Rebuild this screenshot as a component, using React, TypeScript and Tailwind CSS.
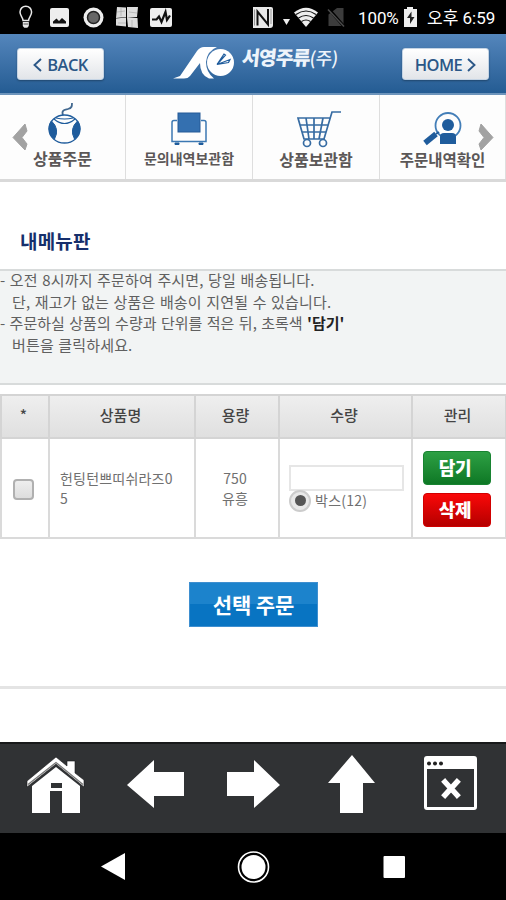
import type { ReactNode } from "react";

const blue = "#1f5c9c";

const StatusBar = () => (
  <div className="flex h-[34px] shrink-0 items-center bg-black text-white">
    <svg width="253" height="34" viewBox="0 0 253 34" fill="none">
      <path d="M23 20.500c0-3-3-4.500-3-8.500a5.800 5.800 0 0 1 11.600 0c0 4-3 5.500-3 8.500z" stroke="#e8e8e8" strokeWidth="1.500" />
      <path d="M22.800 22h6v4l-1.500 1.800h-3L22.800 26z" fill="#e8e8e8" />
      <path d="M23.500 24h4.500" stroke="#555" />
      <rect x="50" y="8" width="19" height="19" rx="2" fill="#eee" />
      <path d="M53 23.500v-2l3.500-3 2.500 2.500 3-3 4 3.500v2z" fill="#111" />
      <circle cx="93.500" cy="17.500" r="10" fill="#eee" />
      <circle cx="93.500" cy="17.500" r="6" fill="#666" stroke="#222" strokeWidth="1.500" />
      <path d="M117 7l9 .5v9.500l-10 1zM127 7h11l-1 10-10 1zM116 18.500l10-1v9l-10-1zM127 18h10.500l.5 10-10-1z" fill="#ddd" />
      <path d="M117 12l8-1M121 8v8M129 12l8 1M132 20v7M118 23h8" stroke="#aaa" strokeWidth=".7" />
      <rect x="150" y="8" width="22" height="19" rx="2" fill="#eee" />
      <path d="M152 19.500h4.500l2.500-3 2.500 5.500 4-10 1.500 8 3-4.500" stroke="#111" strokeWidth="2.200" />
    </svg>
    <svg width="101" height="34" viewBox="253 0 101 34" fill="none">
      <path d="M253 7h18q2 0 2 2v16q0 3-3 3h-17z" fill="#e8e8e8" />
      <path d="M257.500 25.500V11.500l10.500 13V9" stroke="#111" strokeWidth="2" />
      <path d="M254.500 9.500v16M271 9v15" stroke="#999" />
      <path d="M283 19h7l-3.500 6z" fill="#eee" />
      <path d="M294 12.500Q306 3 318 12.500L306 27z" fill="#eee" />
      <path d="M296 14.500q10-7 20 0M298.500 18q7.500-5 15 0M301.500 21.500q4.500-3 9 0" stroke="#111" strokeWidth="1.200" />
      <path d="M328.500 14.500L337 8h6.500v18H328.500z" fill="#3c3c3c" />
      <path d="M328 8l16 18.500" stroke="#000" strokeWidth="3" />
      <path d="M328 9.500l16 17" stroke="#4a4a4a" strokeWidth="1.500" />
    </svg>
    <span className="mt-[2px] ml-[4px] w-[41px] font-['Roboto'] text-[17px] leading-none tracking-[-0.100px]">100%</span>
    <svg className="ml-[4px]" width="15" height="22" viewBox="0 0 15 22">
      <path d="M4 1h6v2h4v18H1V3h3z" fill="#eee" />
      <path d="M8.500 5.500L4 12h3v6l4.500-7H8.500z" fill="#222" />
    </svg>
    <span className="mt-[2px] ml-[9px] whitespace-nowrap font-['Roboto','Noto_Sans_CJK_KR',sans-serif] text-[17px] leading-none">오후 6:59</span>
  </div>
);

const HeaderButton = ({ children }: { children: ReactNode }) => (
  <button className="flex h-[32px] w-[87px] items-center justify-center gap-[5px] rounded-[3px] border border-[#c5d4e4] bg-gradient-to-b from-white via-[#f1f2f4] to-[#e2e5e9] pt-[2px] font-['Open_Sans',sans-serif] text-[16.500px] leading-[28px] font-semibold tracking-[-0.600px] text-[#2b5787] shadow-[0_1px_2px_rgba(0,0,0,0.3)]">
    {children}
  </button>
);

const Chevron = ({ right = false }: { right?: boolean }) => (
  <svg width="9" height="14" viewBox="0 0 9 14" fill="none" stroke="#2b5787" strokeWidth="1.900">
    <path d={right ? "M1 1l6.500 6L1 13" : "M8 1L1.500 7 8 13"} />
  </svg>
);

const Header = () => (
  <header className="flex h-[61px] shrink-0 items-center justify-between border-b-2 border-[#6d94bb] bg-gradient-to-b from-[#5486bc] to-[#245c93] pr-[17px] pl-[17px]">
    <HeaderButton>
      <Chevron />
      <span>BACK</span>
    </HeaderButton>
    <div className="flex h-full items-start pl-[5px]">
      <svg className="mt-[10px]" width="62" height="36" viewBox="0 0 62 36">
        <path d="M0 34.500L7 32 24 7Q27 3 31 3H44Q34 7 33 18Q33 28 41 34.500H36Q27 31 27 19L17 32Q15 34.500 11 34.500z" fill="#fff" />
        <circle cx="47.500" cy="18.500" r="13.500" fill="#fff" />
        <path d="M44 20.500L51 10l1.500 1zM44 20.500l13-5-1.500 3z" fill="#fff" stroke={blue} strokeWidth="1.200" />
      </svg>
      <span className="mt-[10px] ml-[7px] flex -skew-x-6 items-baseline whitespace-nowrap font-['Noto_Sans_CJK_KR',sans-serif] text-[19.500px] leading-[26px] font-black tracking-[-1px] text-[#eef4fb]">
        서영주류
        <span className="text-[18px] font-medium tracking-[-0.300px]">(주)</span>
      </span>
    </div>
    <HeaderButton>
      <span>HOME</span>
      <Chevron right />
    </HeaderButton>
  </header>
);

const MouseIcon = () => (
  <svg width="38" height="44" viewBox="0 0 38 44" fill="none" stroke={blue}>
    <path d="M18 14c-2-5 2-5 5-6 4-1 4-3 4-6" stroke="#42688f" strokeWidth="1.800" />
    <ellipse cx="19.500" cy="28" rx="15.500" ry="14" strokeWidth="1.300" />
    <path d="M6.500 20Q15 28 9.500 38Q4 34 4 28Q4 23 6.500 20zM32.500 20Q24 28 29.500 38Q35 34 35 28Q35 23 32.500 20z" fill={blue} />
    <path d="M9 18Q19.500 27 30 18M11 17Q19.500 19 28 17" strokeWidth="1.200" />
  </svg>
);

const ChairIcon = () => (
  <svg width="38" height="34" viewBox="0 0 38 34" fill="none" stroke={blue}>
    <path d="M7 8.500H4q-2 0-2 2V29.500h34V10.500q0-2-2-2h-3" stroke="#3c78b2" strokeWidth="1.500" />
    <path d="M5 31h4v1.500H5zM29 31h4v1.500h-4z" fill={blue} />
    <rect x="8" y="1" width="22" height="19" fill="#3470b0" stroke="#245a98" />
  </svg>
);

const CartIcon = () => (
  <svg width="46" height="38" viewBox="0 0 46 38" fill="none" stroke="#376ca3" strokeWidth="1.700">
    <path d="M45 2h-9l-8 27H8L2 8h32M4 15h28M6 22h24M10 8l3 21M18 8v21M27 8l-4 21" />
    <circle cx="11" cy="33" r="3.500" />
    <circle cx="27" cy="33" r="3.500" />
  </svg>
);

const SearchPersonIcon = () => (
  <svg width="40" height="35" viewBox="0 0 40 35" fill="none">
    <circle cx="26" cy="13.500" r="12.500" stroke="#437eb8" strokeWidth="1.800" />
    <circle cx="26" cy="13" r="6" fill={blue} />
    <path d="M18 32V25q0-4 4-4h8q4 0 4 4v7z" fill={blue} />
    <path d="M3 31L14 22" stroke={blue} strokeWidth="5.500" />
    <path d="M14 22l3-2" stroke={blue} strokeWidth="2" />
  </svg>
);

const NavArrow = ({ right = false }: { right?: boolean }) => (
  <svg
    className={right ? "absolute top-[29px] right-[12px]" : "absolute top-[29px] left-[12px]"}
    width="16"
    height="28"
    viewBox="0 0 16 28"
  >
    <path
      d={right ? "M3 0L15 13.500 3 26L1 20L6 13.500 1 7z" : "M13 0L1 13.500 13 26L15 20L10 13.500 15 7z"}
      fill="#a2a2a2"
      stroke="#a2a2a2"
    />
  </svg>
);

const navItems = [
  { label: "상품주문", icon: <MouseIcon />, iconStyle: "mt-[6px] h-[45px] ml-[2px]", text: "text-[16px]" },
  { label: "문의내역보관함", icon: <ChairIcon />, iconStyle: "mt-[17px] h-[34px]", text: "text-[14px]" },
  { label: "상품보관함", icon: <CartIcon />, iconStyle: "mt-[15px] h-[37px] ml-[6px]", text: "text-[16px]" },
  { label: "주문내역확인", icon: <SearchPersonIcon />, iconStyle: "mt-[17px] h-[35px] mr-[2px]", text: "text-[15.500px]" },
];

const TopNav = () => (
  <nav className="relative grid h-[87px] shrink-0 grid-cols-[126px_127px_127px_126px] border-b-[3px] border-[#d9d9d9] bg-[#fdfdfd]">
    {navItems.map((item) => (
      <div key={item.label} className="flex flex-col items-center border-r border-[#dedede] last:border-r-0">
        <div className={item.iconStyle}>{item.icon}</div>
        <span className={`${item.text} whitespace-nowrap font-['Noto_Sans_CJK_KR',sans-serif] leading-[24px] font-bold text-[#5b5757]`}>
          {item.label}
        </span>
      </div>
    ))}
    <NavArrow />
    <NavArrow right />
  </nav>
);

const Notice = () => (
  <div className="mt-[16px] h-[116px] shrink-0 border-t-2 border-b-2 border-[#d8dbdb] bg-[#f2f4f4] font-['Noto_Sans_CJK_KR',sans-serif] text-[15px] leading-[21.500px] tracking-[0.150px] whitespace-nowrap text-[#606060] [word-spacing:1px]">
    <div className="-mt-[2px]">
      <p className="tracking-[0.150px]">- 오전 8시까지 주문하여 주시면, 당일 배송됩니다.</p>
      <p className="pl-[12px] tracking-[0.150px]">단, 재고가 없는 상품은 배송이 지연될 수 있습니다.</p>
      <p className="tracking-[0.020px]">
        - 주문하실 상품의 수량과 단위를 적은 뒤, 초록색 <b className="text-[#222]">'담기'</b>
      </p>
      <p className="pl-[12px]">버튼을 클릭하세요.</p>
    </div>
  </div>
);

const ProductTable = () => (
  <table className="mt-[9px] w-[506px] table-fixed border-collapse font-['Noto_Sans_CJK_KR',sans-serif] text-[14px] text-[#707070]">
    <colgroup>
      <col className="w-[48px]" />
      <col className="w-[146px]" />
      <col className="w-[84px]" />
      <col className="w-[133px]" />
      <col className="w-[94px]" />
    </colgroup>
    <thead>
      <tr className="h-[43px] bg-gradient-to-b from-[#efefef] to-[#dfdfdf] text-[15px] text-[#444]">
        {["*", "상품명", "용량", "수량", "관리"].map((title) => (
          <th key={title} className="border-2 border-[#d4d4d4] p-0 pr-[3px] pb-[2px] font-medium">
            {title}
          </th>
        ))}
      </tr>
    </thead>
    <tbody>
      <tr className="h-[100px] bg-white leading-[20px]">
        <td className="border-2 border-[#dadada] p-0">
          <div className="mt-[3px] ml-[11px] h-[21px] w-[21px] rounded-[4px] border-2 border-[#b0b0b0] bg-gradient-to-b from-[#eee] to-[#ddd]" />
        </td>
        <td className="border-2 border-[#dadada] p-0 pl-[10px] tracking-[0.200px]">
          헌팅턴쁘띠쉬라즈0
          <br />5
        </td>
        <td className="border-2 border-[#dadada] p-0 pr-[4px] text-center">
          750
          <br />
          유흥
        </td>
        <td className="border-2 border-[#dadada] p-0 pl-[9px]">
          <div className="h-[26px] w-[115px] border-2 border-[#e6e6e6] bg-white" />
          <div className="-mt-[1px] flex h-[22px] items-center gap-[4px]">
            <span className="flex h-[22px] w-[22px] items-center justify-center rounded-full border-2 border-[#ccc] bg-[#e8e8e8]">
              <span className="h-[11px] w-[11px] rounded-full bg-[#555]" />
            </span>
            <span className="-mt-[2px] tracking-[0.250px]">박스(12)</span>
          </div>
        </td>
        <td className="border-2 border-[#dadada] p-0 pt-[2px]">
          <div className="ml-[10px] flex flex-col gap-[8px] text-[18px] leading-[30px] font-black tracking-[-0.300px] text-white">
            <button className="h-[34px] w-[68px] rounded-[4px] border border-[#188331] bg-gradient-to-b from-[#2da044] to-[#0d7825] pr-[4px] pb-[2px]">담기</button>
            <button className="h-[34px] w-[68px] rounded-[4px] border border-[#d10000] bg-gradient-to-b from-[#fa0909] to-[#b50000] pr-[4px] pb-[2px]">삭제</button>
          </div>
        </td>
      </tr>
    </tbody>
  </table>
);

const Toolbar = () => (
  <div className="h-[91px] shrink-0 border-t-2 border-[#18191a] bg-[#303234]">
    <svg width="506" height="89" viewBox="0 744 506 89" fill="#fff">
      <path d="M27 781L56 757l11 9v-5h8v12l9 7v7L56 764 27 787z" stroke="#191a1b" strokeWidth=".6" />
      <path d="M32 786L56 767l24 19v27H62v-22H50v22H32z" />
      <path d="M51 783h11v5H51z" fill="#303234" />
      <path d="M28 784.500L56 762.500l27 22" fill="none" stroke="#777" strokeWidth="1.300" />
      <path d="M127 785l27-25v12h30v24h-30v12z" />
      <path d="M280 785l-26-25v12h-27v24h27v12z" />
      <path d="M352 755l-24 28h12v30h23v-30h12z" />
      <path fillRule="evenodd" d="M427 756h47q3 0 3 3v48q0 3-3 3h-47q-3 0-3-3v-48q0-3 3-3zm0 13v38h47v-38z" />
      <g fill="#222">
        <circle cx="429" cy="763.500" r="2" />
        <circle cx="435" cy="763.500" r="2" />
        <circle cx="441" cy="763.500" r="2" />
      </g>
      <path d="M445 782l12 13M457 782l-12 13" stroke="#fff" strokeWidth="5.500" strokeLinecap="square" />
    </svg>
  </div>
);

const SystemNav = () => (
  <div className="h-[67px] shrink-0 bg-black">
    <svg width="506" height="67" viewBox="0 833 506 67" fill="#fff">
      <path d="M101 866.500L125 853v27z" />
      <circle cx="253.500" cy="867" r="15" fill="none" stroke="#fff" strokeWidth="1.600" />
      <circle cx="253.500" cy="867" r="12" />
      <rect x="383.500" y="856" width="21.500" height="22" rx="1" />
    </svg>
  </div>
);

const App = () => (
  <div className="flex h-[900px] w-[506px] flex-col overflow-hidden bg-white">
    <StatusBar />
    <Header />
    <TopNav />
    <main className="flex min-h-0 flex-1 flex-col">
      <h1 className="mt-[47px] pl-[20px] font-['Noto_Sans_CJK_KR',sans-serif] text-[19px] leading-[24px] font-bold tracking-[0.200px] text-[#162f6c]">
        내메뉴판
      </h1>
      <Notice />
      <ProductTable />
      <button className="mt-[43px] ml-[189px] h-[45px] w-[129px] shrink-0 border border-[#3e8fd0] bg-gradient-to-b from-[#1c83cc] from-50% to-[#0874c2] to-50% font-['Noto_Sans_CJK_KR',sans-serif] text-[21px] font-bold tracking-[-0.100px] whitespace-nowrap text-white">
        선택 주문
      </button>
      <div className="mt-[59px] h-[3px] shrink-0 bg-[#e4e4e4]" />
    </main>
    <Toolbar />
    <SystemNav />
  </div>
);

export default App;
